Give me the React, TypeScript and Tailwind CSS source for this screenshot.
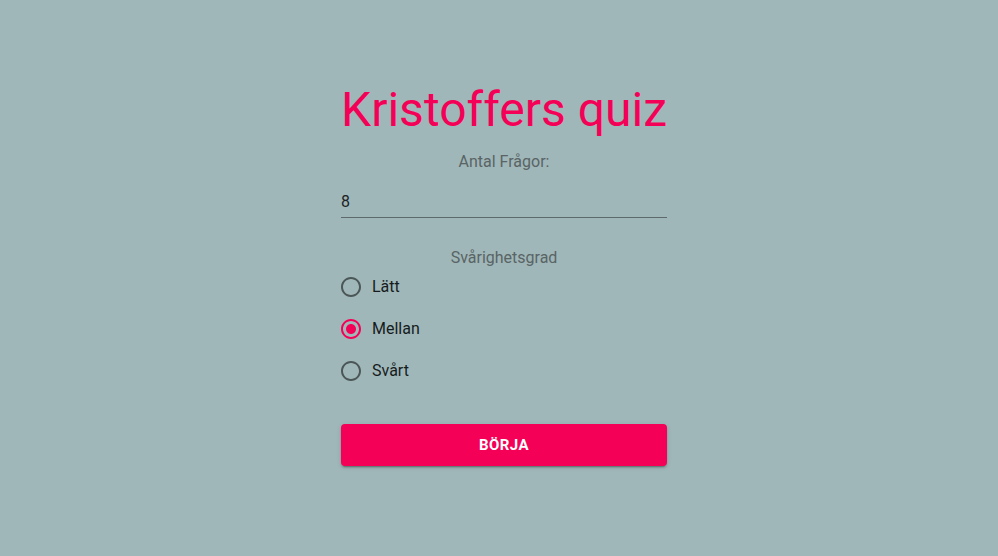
import { useState } from 'react'

const LEVELS = ['Lätt', 'Mellan', 'Svårt']

function RadioIcon({ checked }: { checked: boolean }) {
  return (
    <svg viewBox="0 0 24 24" className="h-6 w-6" fill={checked ? '#f50057' : '#4b5657'}>
      <path d="M12 2C6.48 2 2 6.48 2 12s4.48 10 10 10 10-4.48 10-10S17.52 2 12 2zm0 18c-4.42 0-8-3.58-8-8s3.58-8 8-8 8 3.58 8 8-3.58 8-8 8z" />
      {checked && <path d="M12 7c-2.76 0-5 2.24-5 5s2.24 5 5 5 5-2.24 5-5-2.24-5-5-5z" />}
    </svg>
  )
}

export default function App() {
  const [count, setCount] = useState('8')
  const [level, setLevel] = useState('Mellan')

  return (
    <div className="flex min-h-[556px] justify-center bg-[#a0b7b9] pl-[10px] font-['Roboto',sans-serif]">
      <form className="mt-[82px] flex w-[326px] flex-col" onSubmit={(e) => e.preventDefault()}>
        <h3 className="text-center text-[48px] leading-[56px] font-normal text-[#f50057]">
          Kristoffers quiz
        </h3>

        <label className="mt-[12px] text-center text-base leading-6 text-[#596465]">
          Antal Frågor:
        </label>
        <input
          value={count}
          onChange={(e) => setCount(e.target.value)}
          className="mt-[12px] h-[32px] border-b border-[#5d696a] bg-transparent pt-[6px] pb-[7px] text-base leading-[19px] text-[#1c2324] outline-none"
        />

        <span className="mt-[32px] text-center text-base leading-4 text-[#596465]">
          Svårighetsgrad
        </span>
        <div className="flex flex-col">
          {LEVELS.map((l) => (
            <label key={l} className="-ml-[11px] flex h-[42px] cursor-pointer items-center">
              <input
                type="radio"
                name="level"
                className="hidden"
                checked={level === l}
                onChange={() => setLevel(l)}
              />
              <span className="p-[9px]">
                <RadioIcon checked={level === l} />
              </span>
              <span className="text-base text-[#161c1d]">{l}</span>
            </label>
          ))}
        </div>

        <button
          type="submit"
          className="mt-[32px] h-[42px] rounded bg-[#f50057] text-[15px] font-bold tracking-[0.03em] text-white uppercase shadow-[0_3px_1px_-2px_rgba(0,0,0,0.2),0_2px_2px_0_rgba(0,0,0,0.14),0_1px_5px_0_rgba(0,0,0,0.12)]"
        >
          Börja
        </button>
      </form>
    </div>
  )
}
